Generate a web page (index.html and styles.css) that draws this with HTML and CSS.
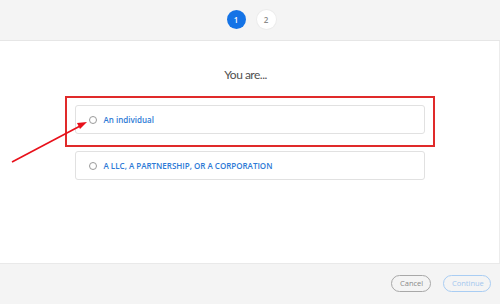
FILE: index.html
```html
<!DOCTYPE html>
<html lang="en">
<head>
    <meta charset="UTF-8">
    <meta name="viewport" content="width=device-width, initial-scale=1.0">
    <title>You are...</title>
    <link rel="stylesheet" href="styles.css">
</head>
<body>
    <div class="steps">
        <span class="step active">1</span>
        <span class="step">2</span>
    </div>

    <div class="main">
        <h2 class="question">You are...</h2>

        <div class="options">
            <div class="highlight">
                <label class="option">
                    <span class="radio"></span>
                    <span class="option-text">An individual</span>
                </label>
            </div>
            <label class="option">
                <span class="radio"></span>
                <span class="option-text">A LLC, A PARTNERSHIP, OR A CORPORATION</span>
            </label>
        </div>

        <!-- annotation arrow -->
        <svg class="arrow" width="100" height="60" viewBox="0 0 100 60">
            <line x1="12" y1="56" x2="82" y2="19" stroke="#e8101a" stroke-width="1.6"/>
            <polygon points="87,16 77,17 80,23" fill="#e8101a"/>
        </svg>
    </div>

    <div class="footer">
        <button class="btn btn-cancel">Cancel</button>
        <button class="btn btn-continue">Continue</button>
    </div>
</body>
</html>
```

FILE: styles.css
```css
body {
    margin: 0;
    padding: 0;
    width: 500px;
    height: 304px;
    font-family: 'Open Sans', 'Liberation Sans', sans-serif;
    background: #f4f4f4;
    overflow: hidden;
}

.steps {
    height: 41px;
    display: flex;
    justify-content: center;
    align-items: center;
    gap: 11px;
    padding-left: 2px;
    padding-bottom: 1px;
    box-sizing: border-box;
    border-bottom: 1px solid #e6e6e6;
}

.step {
    width: 19px;
    height: 19px;
    border-radius: 50%;
    background: #fff;
    color: #8a8a8a;
    font-size: 8px;
    font-weight: 600;
    display: flex;
    justify-content: center;
    align-items: center;
    box-shadow: 0 0 0 1px #ececec;
}

.step.active {
    background: #1473e6;
    color: #fff;
    box-shadow: none;
}

.main {
    position: relative;
    height: 222px;
    background: #fff;
    border-right: 1px solid #ececec;
    box-sizing: border-box;
    padding-top: 25px;
}

.question {
    margin: 0 0 13px;
    padding-right: 8px;
    text-align: center;
    font-family: 'Lato', 'Open Sans', sans-serif;
    font-size: 12px;
    font-weight: 400;
    color: #505050;
    letter-spacing: -0.5px;
    line-height: 17px;
}

.options {
    display: flex;
    flex-direction: column;
    align-items: center;
    gap: 4px;
}

.highlight {
    width: 370px;
    box-sizing: border-box;
    border: 2px solid #e02a2a;
    padding: 7px 8px 11px;
}

.option {
    width: 350px;
    height: 29px;
    box-sizing: border-box;
    border: 1px solid #e1e1e1;
    border-radius: 3px;
    background: #fff;
    display: flex;
    align-items: center;
    padding-left: 13px;
    gap: 7px;
    cursor: pointer;
}

.highlight .option {
    width: 100%;
}

.radio {
    width: 8px;
    height: 8px;
    border-radius: 50%;
    border: 1px solid #9a9a9a;
    box-sizing: border-box;
}

.option-text {
    font-size: 8px;
    font-weight: 600;
    color: #2d7ad6;
}

.arrow {
    position: absolute;
    left: 0;
    top: 65px;
}

.footer {
    height: 40px;
    display: flex;
    justify-content: flex-end;
    align-items: center;
    gap: 12px;
    padding-right: 9px;
    border-top: 1px solid #e9e9e9;
    box-sizing: border-box;
    padding-bottom: 1px;
}

.btn {
    height: 17px;
    border-radius: 9px;
    background: transparent;
    font-family: 'Open Sans', 'Liberation Sans', sans-serif;
    font-size: 7.5px;
    padding: 0 8px;
    cursor: pointer;
}

.btn-cancel {
    width: 40px;
    border: 1.5px solid #a8a8a8;
    color: #8a8a8a;
}

.btn-continue {
    width: 48px;
    border: 1.5px solid #a9cdf3;
    color: #a3c7ef;
}
```
